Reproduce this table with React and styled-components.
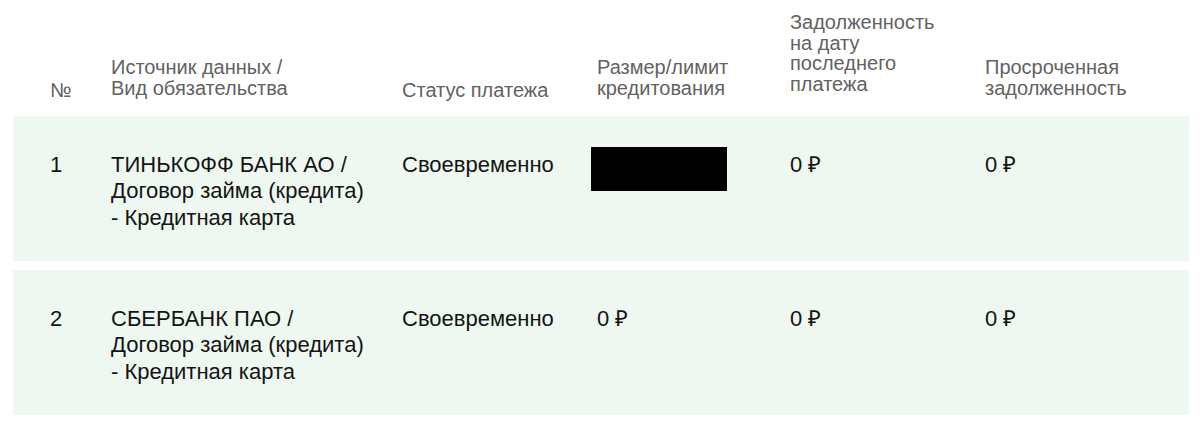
import styled, { createGlobalStyle } from "styled-components";

const GlobalStyle = createGlobalStyle`
  body {
    margin: 0;
    background: #ffffff;
    font-family: "Liberation Sans", Arial, Helvetica, sans-serif;
  }
`;

const Wrap = styled.div`
  width: 1200px;
  padding: 0 11px 0 13px;
  box-sizing: border-box;
`;

const columns = "61px 291px 195px 193px 195px 1fr";

const HeadRow = styled.div`
  display: grid;
  grid-template-columns: ${columns};
  align-items: end;
  padding: 12px 0 15px 37px;
  font-size: 20px;
  line-height: 20.7px;
  color: #626262;
`;

const HeadCell = styled.div`
  padding-bottom: ${(p) => p.$lift || 0}px;
`;

const List = styled.div`
  display: flex;
  flex-direction: column;
  gap: 9px;
`;

const Row = styled.div`
  display: grid;
  grid-template-columns: ${columns};
  align-items: start;
  height: 145px;
  box-sizing: border-box;
  padding: 36px 0 0 37px;
  background: #eef8f1;
  font-size: 22px;
  line-height: 26.5px;
  color: #141414;
`;

const Cell = styled.div``;

const Line = styled.span`
  display: block;
  white-space: nowrap;
`;

const Redacted = styled.div`
  width: 136px;
  height: 44px;
  margin: -5px 0 0 -6px;
  background: #000000;
`;

const rows = [
  {
    n: 1,
    source: ["ТИНЬКОФФ БАНК АО /", "Договор займа (кредита)", "- Кредитная карта"],
    status: "Своевременно",
    limit: null,
    debt: "0 ₽",
    overdue: "0 ₽",
  },
  {
    n: 2,
    source: ["СБЕРБАНК ПАО /", "Договор займа (кредита)", "- Кредитная карта"],
    status: "Своевременно",
    limit: "0 ₽",
    debt: "0 ₽",
    overdue: "0 ₽",
  },
];

export default function App() {
  return (
    <>
      <GlobalStyle />
      <Wrap>
        <HeadRow>
          <HeadCell>№</HeadCell>
          <HeadCell $lift={2}>
            <Line>Источник данных /</Line>
            <Line>Вид обязательства</Line>
          </HeadCell>
          <HeadCell>Статус платежа</HeadCell>
          <HeadCell $lift={2}>
            <Line>Размер/лимит</Line>
            <Line>кредитования</Line>
          </HeadCell>
          <HeadCell $lift={6}>
            <Line>Задолженность</Line>
            <Line>на дату</Line>
            <Line>последнего</Line>
            <Line>платежа</Line>
          </HeadCell>
          <HeadCell $lift={2}>
            <Line>Просроченная</Line>
            <Line>задолженность</Line>
          </HeadCell>
        </HeadRow>
        <List>
          {rows.map((r) => (
            <Row key={r.n}>
              <Cell>{r.n}</Cell>
              <Cell>
                {r.source.map((s) => (
                  <Line key={s}>{s}</Line>
                ))}
              </Cell>
              <Cell>{r.status}</Cell>
              <Cell>{r.limit === null ? <Redacted /> : r.limit}</Cell>
              <Cell>{r.debt}</Cell>
              <Cell>{r.overdue}</Cell>
            </Row>
          ))}
        </List>
      </Wrap>
    </>
  );
}
